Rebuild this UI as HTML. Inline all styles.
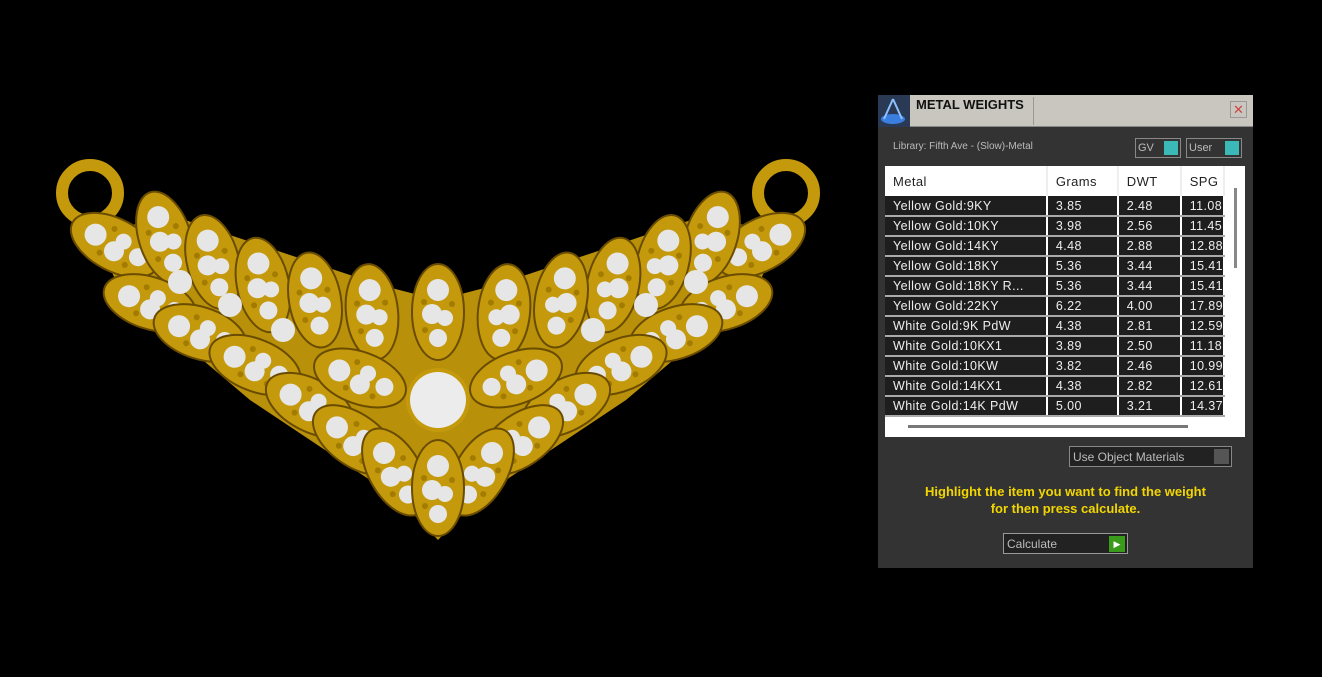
<!DOCTYPE html>
<html><head><meta charset="utf-8"><style>
*{margin:0;padding:0;box-sizing:border-box}
body{width:1322px;height:677px;background:#000;position:relative;overflow:hidden;font-family:"Liberation Sans",sans-serif}
#p{position:absolute;left:878px;top:95px;width:375px;height:473px;background:#333}
#tb{position:absolute;left:0;top:0;width:375px;height:32px;background:#c9c6c0;border-bottom:1px solid #888}
#tb .t{position:absolute;left:38px;top:2px;font-weight:bold;font-size:13px;color:#111}
#tb .sep{position:absolute;left:155px;top:2px;width:1px;height:28px;background:#999}
#tb .x{position:absolute;left:352px;top:6px;width:17px;height:17px;border:1px solid #999;color:#c44;font-size:13px;text-align:center;line-height:15px}
#lib{position:absolute;left:15px;top:46px;font-size:10px;color:#bbb}
.tg{position:absolute;top:43px;height:20px;border:1px solid #888;font-size:11px;color:#bbb;padding:3px 2px}
.tg i{position:absolute;right:2px;top:2px;width:14px;height:14px;background:#3bb8b8}
#tbl{position:absolute;left:7px;top:71px;width:360px;height:271px;background:#fff}
table{border-collapse:collapse;font-size:12.5px;position:absolute;left:0;top:0;width:340px;letter-spacing:.4px}
td{height:20px;padding-left:8px;color:#eee;background:#1e1e1e;border-right:2px solid #fff;border-bottom:2px solid #aaa;white-space:nowrap;overflow:hidden}
th{height:30px;text-align:left;padding-left:8px;font-weight:normal;color:#222;font-size:13px;border-right:2px solid #eee}
#hs{position:absolute;left:23px;top:259px;width:280px;height:3px;background:#777}
#vs{position:absolute;left:349px;top:22px;width:3px;height:80px;background:#888}
#uom{position:absolute;left:191px;top:351px;width:163px;height:21px;border:1px solid #888;background:#222;color:#bbb;font-size:12px;padding:3px 3px}
#uom i{position:absolute;right:2px;top:2px;width:15px;height:15px;background:#555}
#msg{position:absolute;left:0;width:375px;top:388px;text-align:center;color:#f2d600;font-weight:bold;font-size:13px;line-height:17px}
#calc{position:absolute;left:125px;top:438px;width:125px;height:21px;border:1px solid #999;background:#222;color:#bbb;font-size:12px;padding:3px 3px}
#calc i{position:absolute;right:2px;top:2px;width:16px;height:16px;background:#3a9a1a;color:#fff;font-size:9px;text-align:center;line-height:16px;font-style:normal}
</style></head><body>
<svg width="870" height="600" style="position:absolute;left:0;top:0">
<defs>
<g id="leaf"><ellipse rx="26" ry="48" fill="#c49a0c" stroke="#6a4c00" stroke-width="2"/><circle cy="-22" r="11" fill="#e6e6e6"/><circle cx="-6" cy="2" r="10" fill="#e6e6e6"/><circle cx="7" cy="6" r="8" fill="#e6e6e6"/><circle cy="26" r="9" fill="#e6e6e6"/><circle cx="-14" cy="-10" r="3" fill="#a37b00"/><circle cx="14" cy="-8" r="3" fill="#a37b00"/><circle cx="-13" cy="18" r="3" fill="#a37b00"/></g>
<g id="half">
<circle cx="90" cy="193" r="28" fill="none" stroke="#c49a0c" stroke-width="12"/>
<path d="M95 235 L170 215 L380 285 L438 300 L438 540 L400 500 L250 400 L120 290 Z" fill="#b8900a"/>
<use href="#leaf" transform="translate(115,245) rotate(-62)"/>
<use href="#leaf" transform="translate(165,238) rotate(-18)"/>
<use href="#leaf" transform="translate(213,262) rotate(-14)"/>
<use href="#leaf" transform="translate(263,285) rotate(-12)"/>
<use href="#leaf" transform="translate(315,300) rotate(-10)"/>
<use href="#leaf" transform="translate(372,312) rotate(-6)"/>
<use href="#leaf" transform="translate(150,303) rotate(-72)"/>
<use href="#leaf" transform="translate(200,333) rotate(-72)"/>
<use href="#leaf" transform="translate(255,365) rotate(-68)"/>
<use href="#leaf" transform="translate(310,405) rotate(-62)"/>
<use href="#leaf" transform="translate(360,378) rotate(-70)"/>
<use href="#leaf" transform="translate(355,440) rotate(-55)"/>
<use href="#leaf" transform="translate(395,472) rotate(-30)"/>
<circle cx="180" cy="282" r="12" fill="#e6e6e6"/><circle cx="230" cy="305" r="12" fill="#e6e6e6"/><circle cx="283" cy="330" r="12" fill="#e6e6e6"/>
</g>
</defs>
<use href="#half"/>
<use href="#half" transform="translate(876,0) scale(-1,1)"/>
<use href="#leaf" transform="translate(438,312)"/>
<use href="#leaf" transform="translate(438,488)"/>
<circle cx="438" cy="400" r="32" fill="#c49a0c"/>
<circle cx="438" cy="400" r="28" fill="#ececec"/>
</svg>
<div id="p">
<div id="tb"><svg width="32" height="32" style="position:absolute;left:0;top:0"><rect width="32" height="32" fill="#2a3a55"/><ellipse cx="15" cy="24" rx="12" ry="5" fill="#3a7ee0"/><path d="M15 4 L6 24 M15 4 L24 24" stroke="#8cc0ff" stroke-width="2"/></svg><div class="t">METAL WEIGHTS</div><div class="sep"></div><div class="x">✕</div></div>
<div id="lib">Library: Fifth Ave - (Slow)-Metal</div>
<div class="tg" style="left:257px;width:46px">GV<i></i></div>
<div class="tg" style="left:308px;width:56px">User<i></i></div>
<div id="tbl">
<table>
<tr><th style="width:162px">Metal</th><th style="width:71px">Grams</th><th style="width:63px">DWT</th><th>SPG</th></tr>
<tr><td>Yellow Gold:9KY</td><td>3.85</td><td>2.48</td><td>11.08</td></tr>
<tr><td>Yellow Gold:10KY</td><td>3.98</td><td>2.56</td><td>11.45</td></tr>
<tr><td>Yellow Gold:14KY</td><td>4.48</td><td>2.88</td><td>12.88</td></tr>
<tr><td>Yellow Gold:18KY</td><td>5.36</td><td>3.44</td><td>15.41</td></tr>
<tr><td>Yellow Gold:18KY R...</td><td>5.36</td><td>3.44</td><td>15.41</td></tr>
<tr><td>Yellow Gold:22KY</td><td>6.22</td><td>4.00</td><td>17.89</td></tr>
<tr><td>White Gold:9K PdW</td><td>4.38</td><td>2.81</td><td>12.59</td></tr>
<tr><td>White Gold:10KX1</td><td>3.89</td><td>2.50</td><td>11.18</td></tr>
<tr><td>White Gold:10KW</td><td>3.82</td><td>2.46</td><td>10.99</td></tr>
<tr><td>White Gold:14KX1</td><td>4.38</td><td>2.82</td><td>12.61</td></tr>
<tr><td>White Gold:14K PdW</td><td>5.00</td><td>3.21</td><td>14.37</td></tr>
</table>
<div id="hs"></div><div id="vs"></div>
</div>
<div id="uom">Use Object Materials<i></i></div>
<div id="msg">Highlight the item you want to find the weight<br>for then press calculate.</div>
<div id="calc">Calculate<i>▶</i></div>
</div>
</body></html>
